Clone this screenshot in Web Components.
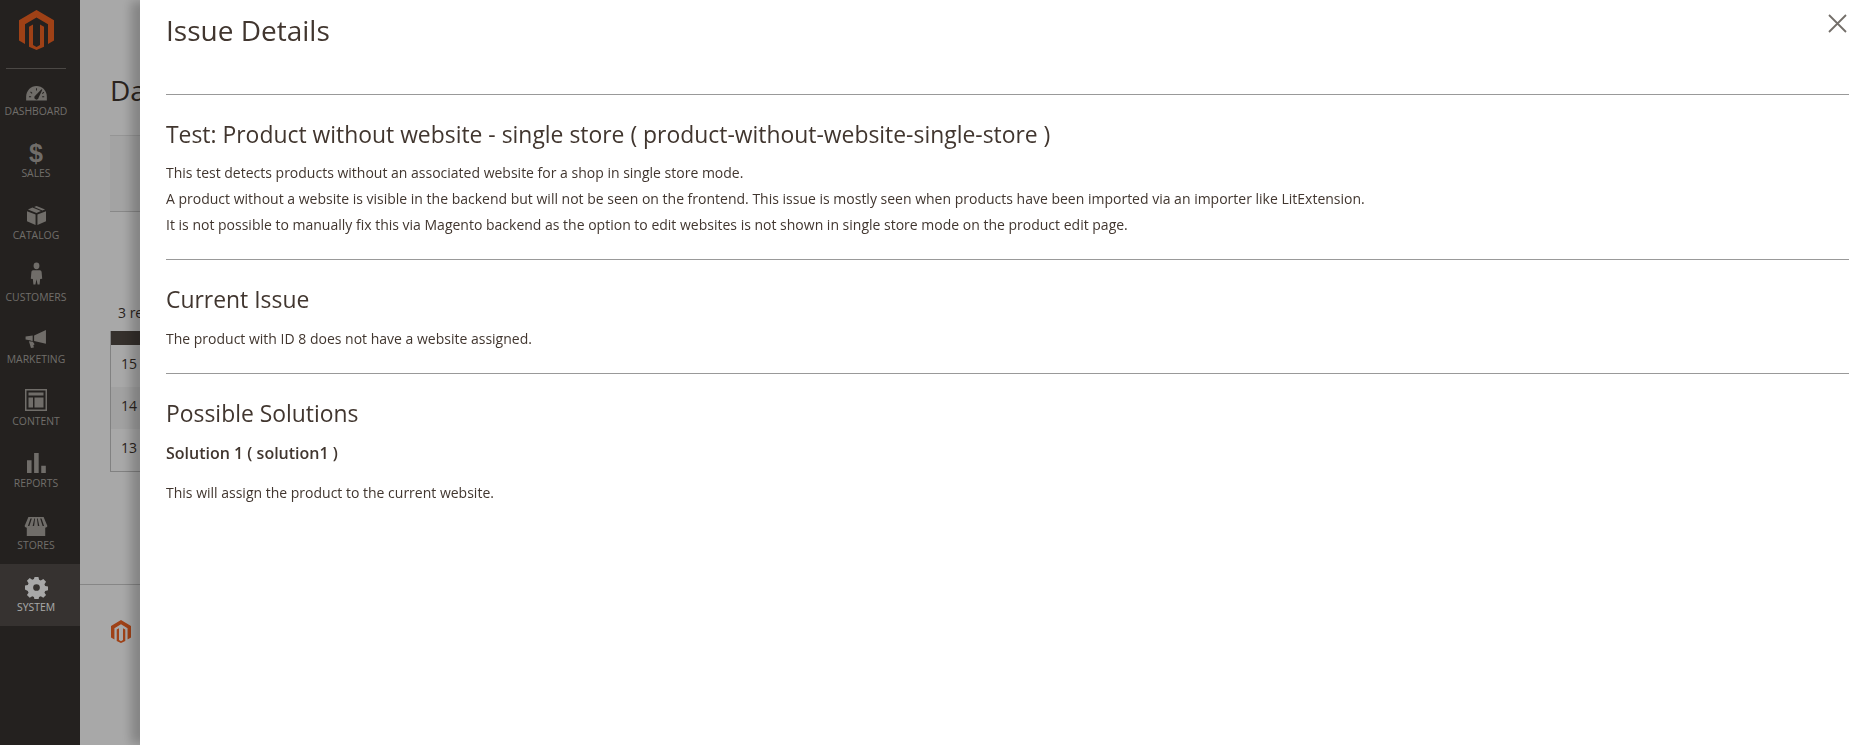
<!DOCTYPE html>
<html>
<head>
<meta charset="utf-8">
<title>Issue Details</title>
<style>
	html, body { margin: 0; height: 100%; overflow: hidden; background: #fff; }
	body { font-family: "Open Sans", sans-serif; color: #41362f; }
</style>
</head>
<body>
<admin-shell>
	<admin-menu slot="menu">
		<menu-item label="Dashboard">
			<svg viewBox="0 0 24 17" width="23" height="16"><path fill="currentColor" d="M1 16.500V12.500C1 6 6 1 12 1s11 5 11 11.500v4z"/><path fill="#373330" d="M17.300 4.500l.9.500-3.900 8.300a2.300 2.300 0 1 1-3.700-1.900zM4 12h2.300v1H4zM6 7l1.700 1.500-.7.700L5.300 7.700zM11.500 3.500h1v2.300h-1zM19.500 7.300l.7.800-1.700 1.400-.7-.8zM18 12h2.200v1H18z"/></svg>
		</menu-item>
		<menu-item label="Sales"><span style="font:700 25px/24px 'Liberation Sans',sans-serif;display:block;margin-bottom:-2px">$</span></menu-item>
		<menu-item label="Catalog">
			<svg viewBox="0 0 20 21" width="19" height="20"><path fill="currentColor" d="M0 6.500l9 3.500v11L0 17zM20 6.500L11 10v11l9-4zM1 4.700L5.700 2.700l9 3.700L10 8.500zM7.500 2l2.500-1 9 3.700-2.800 1.100z"/></svg>
		</menu-item>
		<menu-item label="Customers">
			<svg viewBox="0 0 16 24" width="13" height="23" style="margin-bottom:2px" preserveAspectRatio="none"><circle cx="8" cy="4" r="3.600" fill="currentColor"/><path fill="currentColor" d="M3.800 8.500h8.400c1.200 0 2 .8 2.100 2l.7 7-2.500.3-.7 5.700H9.300L8 18l-1.300 5.500H4.200l-.7-5.700-2.500-.3.700-7c.1-1.200.9-2 2.100-2z"/></svg>
		</menu-item>
		<menu-item label="Marketing">
			<svg viewBox="0 0 22 19" width="22" height="18" style="margin-bottom:1px"><path fill="currentColor" d="M21.500 0v14.500L9 11.700v-6zM0 6.800l7.500-1v5.800l-2 -.3.1-.1L0 10zM3.500 11.800l4.200.7 1.800 2.500-1.300 1.100 .6 2.400-3.100.5z"/></svg>
		</menu-item>
		<menu-item label="Content">
			<svg viewBox="0 0 22 22" width="22" height="22"><path fill="currentColor" fill-rule="evenodd" d="M0 0h22v22H0zM1.500 1.500v19h19v-19zM3.500 3.500h15v3h-15zM3.500 8.500h4.500v10H3.500zM9.500 8.500h9v10h-9z"/></svg>
		</menu-item>
		<menu-item label="Reports">
			<svg viewBox="0 0 20 21" width="19" height="20"><path fill="currentColor" d="M0 7.500h4.800V21H0zM7.500 0h4.800v21H7.500zM15 13.500h4.800V21H15z"/></svg>
		</menu-item>
		<menu-item label="Stores">
			<svg viewBox="0 0 24 20" width="24" height="19" style="margin-bottom:-1px"><path fill="currentColor" fill-rule="evenodd" d="M4 0h16l4 9.500c-.4 1.300-1.300 1.800-2.300 1.800v8.700H2.300v-8.700C1.300 11.300.4 10.800 0 9.500zM6.200 1.500 3.500 9.500h1.500l2.600-8zM10.200 1.500 8.500 9.500H10l1-8zM13 1.500l1 8h1.500l-1.700-8zM16.400 1.500l2.600 8h1.500l-2.700-8z"/></svg>
		</menu-item>
		<menu-item label="System" active>
			<svg viewBox="-1 -1 26 26" width="23" height="23" style="margin-bottom:-2px"><path fill="currentColor" fill-rule="evenodd" d="M9.800 0h4.400l.7 3.300 1.900.8 2.900-1.800 3.100 3.100-1.800 2.900.8 1.900 3.200.6v4.400l-3.200.7-.8 1.900 1.800 2.800-3.100 3.100-2.900-1.800-1.900.8-.7 3.300H9.800l-.7-3.300-1.900-.8-2.900 1.800-3.100-3.100 1.800-2.800-.8-1.900L-1 14.200V9.800l3.200-.6.8-1.900-1.800-2.900 3.100-3.100 2.900 1.800 1.900-.8zM12 8.200a3.800 3.800 0 1 0 0 7.600 3.800 3.800 0 0 0 0-7.600z"/></svg>
		</menu-item>
	</admin-menu>
	<dashboard-page slot="main"></dashboard-page>
</admin-shell>
<modal-overlay></modal-overlay>
<issue-panel>
	<issue-section heading="Test: Product without website - single store ( product-without-website-single-store )">
		<p>This test detects products without an associated website for a shop in single store mode.</p>
		<p>A product without a website is visible in the backend but will not be seen on the frontend. This issue is mostly seen when products have been imported via an importer like LitExtension.</p>
		<p>It is not possible to manually fix this via Magento backend as the option to edit websites is not shown in single store mode on the product edit page.</p>
	</issue-section>
	<issue-section heading="Current Issue">
		<p>The product with ID 8 does not have a website assigned.</p>
	</issue-section>
	<issue-section heading="Possible Solutions" last>
		<h3>Solution 1 ( solution1 )</h3>
		<p>This will assign the product to the current website.</p>
	</issue-section>
</issue-panel>
<script>
const LOGO = `<polygon fill="currentColor" points="17.500,0 35,10.300 35,30.500 29,34 29,14.200 17.500,7.500 6,14.200 6,34 0,30.500 0,10.300"/><polygon fill="currentColor" points="14,14.500 14,35 17.500,37 21,35 21,14.500 25,16.700 25,36.700 17.500,40 10,36.700 10,16.700"/>`;

class AdminShell extends HTMLElement {
	constructor() {
		super();
		this.attachShadow({ mode: 'open' });
		this.shadowRoot.innerHTML = `
			<style>
				:host { display: grid; grid-template-columns: 80px 1fr; height: 745px; }
			</style>
			<slot name="menu"></slot>
			<slot name="main"></slot>
		`;
	}
}

class AdminMenu extends HTMLElement {
	constructor() {
		super();
		this.attachShadow({ mode: 'open' });
		this.shadowRoot.innerHTML = `
			<style>
				:host { display: flex; flex-direction: column; background: #373330; height: 745px; }
				.logo { display: flex; justify-content: center; padding: 10px 7px 18px 0; color: #f26322; height: 40px; }
				.sep { height: 1px; background: #736e6a; margin: 0 14px 0 6px; }
				nav { display: flex; flex-direction: column; margin-top: -1px; }
			</style>
			<div class="logo"><svg viewBox="0 0 35 40" width="35" height="40">${LOGO}</svg></div>
			<div class="sep"></div>
			<nav><slot></slot></nav>
		`;
	}
}

class MenuItem extends HTMLElement {
	constructor() {
		super();
		this.attachShadow({ mode: 'open' });
		this.shadowRoot.innerHTML = `
			<style>
				:host { display: flex; flex-direction: column; align-items: center; height: 62px; padding-right: 8px; box-sizing: border-box; color: #aaa6a0; }
				:host([active]) { background: #524d49; color: #fff; }
				.icon { height: 33px; display: flex; align-items: flex-end; justify-content: center; }
				span { font-size: 10.400px; line-height: 14px; text-transform: uppercase; margin-top: 3px; white-space: nowrap; }
			</style>
			<div class="icon"><slot></slot></div>
			<span>${this.getAttribute('label')}</span>
		`;
	}
}

class DashboardPage extends HTMLElement {
	constructor() {
		super();
		this.attachShadow({ mode: 'open' });
		this.shadowRoot.innerHTML = `
			<style>
				:host { display: flex; flex-direction: column; height: 745px; padding: 0 0 0 30px; box-sizing: border-box; overflow: hidden; color: #41362f; }
				h1 { font-size: 28px; font-weight: 400; line-height: 36px; margin: 72px 0 27px; }
				.notice { height: 77px; background: #f8f8f8; border-top: 1px solid #e3e3e3; border-bottom: 1px solid #cfcfcf; box-sizing: border-box; }
				.count { font-size: 14px; line-height: 19px; margin: 91px 0 9px 8px; white-space: nowrap; }
				.grid { border: 1px solid #c4c4c4; border-top: 0; }
				.head { height: 14px; background: #514943; }
				.row { height: 42px; font-size: 14px; line-height: 38px; padding-left: 10px; }
				.row.alt { background: #f5f5f5; }
				footer { margin: 112px 0 0 -30px; padding: 35px 0 0 31px; border-top: 1px solid #cccccc; color: #f26322; }
				footer svg { display: block; }
			</style>
			<h1>Da</h1>
			<div class="notice"></div>
			<div class="count">3 re</div>
			<div class="grid">
				<div class="head"></div>
				<div class="row">15</div>
				<div class="row alt">14</div>
				<div class="row">13</div>
			</div>
			<footer><svg viewBox="0 0 35 40" width="20" height="23">${LOGO}</svg></footer>
		`;
	}
}

class ModalOverlay extends HTMLElement {
	constructor() {
		super();
		this.attachShadow({ mode: 'open' });
		this.shadowRoot.innerHTML = `
			<style>
				:host { position: fixed; inset: 0; background: rgba(0, 0, 0, .34); }
			</style>
		`;
	}
}

class IssuePanel extends HTMLElement {
	constructor() {
		super();
		this.attachShadow({ mode: 'open' });
		this.shadowRoot.innerHTML = `
			<style>
				:host { position: fixed; top: 0; bottom: 0; left: 140px; right: 0; background: #fff; box-shadow: -10px 0 10px -1px rgba(0, 0, 0, .22); color: #41362f; padding: 0 26px; }
				header { height: 95px; box-sizing: border-box; border-bottom: 1px solid #999; }
				h1 { margin: 0; padding-top: 10px; font-size: 28px; font-weight: 400; line-height: 40px; }
				button { position: absolute; top: 14px; right: 28px; width: 19px; height: 19px; padding: 0; border: 0; background: none; color: #736e69; }
				svg { display: block; }
			</style>
			<header><h1>Issue Details</h1></header>
			<button aria-label="Close"><svg viewBox="0 0 19 19" width="19" height="19"><path d="M1 1l17 17M18 1L1 18" stroke="currentColor" stroke-width="1.800" fill="none"/></svg></button>
			<slot></slot>
		`;
	}
}

class IssueSection extends HTMLElement {
	constructor() {
		super();
		this.attachShadow({ mode: 'open' });
		this.shadowRoot.innerHTML = `
			<style>
				:host { display: block; border-bottom: 1px solid #999; padding: 23px 0 21px; }
				:host([last]) { border-bottom: 0; }
				h2 { margin: 0 0 9px; font-size: 22.900px; font-weight: 400; line-height: 34px; }
				:host(:first-of-type) h2 { margin-bottom: 8px; }
				::slotted(p) { margin: 0; font-size: 14px; line-height: 26px; }
				::slotted(h3) { margin: 1px 0 14px; font-size: 16px; font-weight: 600; line-height: 26px; }
			</style>
			<h2>${this.getAttribute('heading')}</h2>
			<slot></slot>
		`;
	}
}

customElements.define('admin-shell', AdminShell);
customElements.define('admin-menu', AdminMenu);
customElements.define('menu-item', MenuItem);
customElements.define('dashboard-page', DashboardPage);
customElements.define('modal-overlay', ModalOverlay);
customElements.define('issue-panel', IssuePanel);
customElements.define('issue-section', IssueSection);
</script>
</body>
</html>
